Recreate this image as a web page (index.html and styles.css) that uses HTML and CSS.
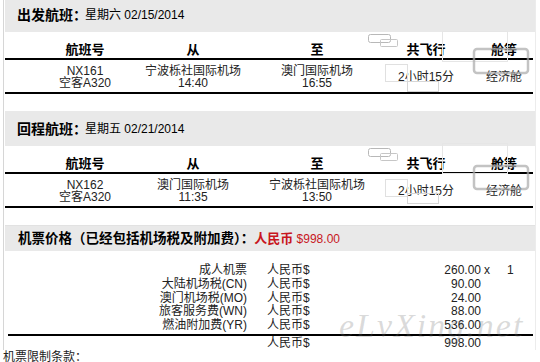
FILE: index.html
```html
<!DOCTYPE html>
<html lang="zh-CN">
<head>
<meta charset="utf-8">
<title>航班信息</title>
<link rel="stylesheet" href="styles.css">
</head>
<body>
<div class="page">
  <div class="panel">
    <section class="leg">
      <div class="band"><b class="band-label">出发航班：</b><span class="band-date">星期六 02/15/2014</span></div>
      <div class="flight">
        <div class="frow fhead"><span>航班号</span><span>从</span><span>至</span><span>共飞行</span><span class="last">舱等</span></div>
        <div class="frow fdata">
          <div class="cell"><span>NX161</span><span>空客A320</span></div>
          <div class="cell"><span>宁波栎社国际机场</span><span>14:40</span></div>
          <div class="cell"><span>澳门国际机场</span><span>16:55</span></div>
          <div class="cell mid">2小时15分</div>
          <div class="cell mid last">经济舱</div>
        </div>
      </div>
      <svg class="marks" width="530" height="100" viewBox="0 0 530 100" aria-hidden="true">
        <rect x="437.5" y="34.5" width="65" height="30" fill="none" stroke="#e6e6e6"/>
        <rect x="363.5" y="37.5" width="22" height="8" rx="2" fill="none" stroke="#b8b8b8"/>
        <rect x="375.5" y="42.5" width="17" height="7" rx="1" fill="none" stroke="#c6c6c6"/>
        <rect x="469" y="52" width="54" height="24" rx="3" fill="none" stroke="#aaaaaa" stroke-opacity="0.7" stroke-width="2.5"/>
        <rect x="380.5" y="67.5" width="22" height="17" fill="none" stroke="#e0e0e0"/>
        <rect x="402.5" y="84.5" width="31" height="10" fill="none" stroke="#d6d6d6"/>
      </svg>
    </section>

    <section class="leg">
      <div class="band"><b class="band-label">回程航班：</b><span class="band-date">星期五 02/21/2014</span></div>
      <div class="flight">
        <div class="frow fhead"><span>航班号</span><span>从</span><span>至</span><span>共飞行</span><span class="last">舱等</span></div>
        <div class="frow fdata">
          <div class="cell"><span>NX162</span><span>空客A320</span></div>
          <div class="cell"><span>澳门国际机场</span><span>11:35</span></div>
          <div class="cell"><span>宁波栎社国际机场</span><span>13:50</span></div>
          <div class="cell mid">2小时15分</div>
          <div class="cell mid last">经济舱</div>
        </div>
      </div>
      <svg class="marks" width="530" height="100" viewBox="0 0 530 100" aria-hidden="true">
        <rect x="437.5" y="32.5" width="65" height="30" fill="none" stroke="#e6e6e6"/>
        <rect x="363.5" y="37.5" width="22" height="8" rx="2" fill="none" stroke="#b8b8b8"/>
        <rect x="375.5" y="42.5" width="17" height="7" rx="1" fill="none" stroke="#c6c6c6"/>
        <rect x="469" y="55" width="54" height="23" rx="3" fill="none" stroke="#aaaaaa" stroke-opacity="0.7" stroke-width="2.5"/>
        <rect x="380.5" y="68.5" width="22" height="17" fill="none" stroke="#e0e0e0"/>
        <rect x="402.5" y="82.5" width="31" height="10" fill="none" stroke="#d6d6d6"/>
      </svg>
    </section>

    <section class="price">
      <div class="pband"><b class="pband-label">机票价格（已经包括机场税及附加费）：</b><span class="red"><b>人民币</b> $998.00</span></div>
      <div class="fees">
        <span class="lbl">成人机票</span><span class="cur">人民币$</span><span class="amt">260.00</span><span class="mul">x</span><span class="qty">1</span>
        <span class="lbl">大陆机场税(CN)</span><span class="cur">人民币$</span><span class="amt">90.00</span><span></span><span></span>
        <span class="lbl">澳门机场税(MO)</span><span class="cur">人民币$</span><span class="amt">24.00</span><span></span><span></span>
        <span class="lbl">旅客服务费(WN)</span><span class="cur">人民币$</span><span class="amt">88.00</span><span></span><span></span>
        <span class="lbl">燃油附加费(YR)</span><span class="cur">人民币$</span><span class="amt">536.00</span><span></span><span></span>
        <div class="rule"></div>
        <span class="lbl total"></span><span class="cur total">人民币$</span><span class="amt total">998.00</span><span class="total"></span><span class="total"></span>
      </div>
      <div class="watermark" aria-hidden="true">eLvXing.net</div>
    </section>
  </div>
  <p class="terms">机票限制条款：</p>
</div>
</body>
</html>
```

FILE: styles.css
```css
* { box-sizing: border-box; }

html, body {
  margin: 0;
  padding: 0;
  background: #ffffff;
}

body {
  font-family: "Liberation Sans", "Noto Sans CJK SC", sans-serif;
  font-size: 12px;
  color: #222;
  overflow: hidden;
}

.page {
  padding-left: 3px;
  width: 540px;
  height: 362px;
  overflow: hidden;
}

.panel {
  width: 533px;
  margin-top: -3px;
  border-left: 1px solid #d6d6d6;
  border-right: 1px solid #ececec;
  padding-left: 1px;
}

.leg {
  position: relative;
  padding-bottom: 17px;
}

.band {
  height: 35px;
  background: #e9e9e9;
  display: flex;
  align-items: center;
  padding: 1px 0 0 12px;
  color: #000;
}

.band-label {
  font-size: 14px;
  font-weight: 700;
  line-height: 16px;
}

.band-date {
  font-size: 12px;
  line-height: 16px;
  margin-left: -2px;
}

.flight {
  width: 528px;
}

.frow {
  display: grid;
  grid-template-columns: 120px 96px 152px 66px 74px;
  padding-left: 20px;
  border-bottom: 2px solid #000;
  text-align: center;
  white-space: nowrap;
}

.fhead {
  padding-top: 10px;
  font-size: 13px;
  font-weight: 700;
  line-height: 16px;
  color: #000;
}

.fhead .last, .fdata .last {
  padding-left: 16px;
}

.fdata {
  padding-top: 6px;
  padding-bottom: 3px;
  line-height: 11.5px;
}

.cell {
  display: flex;
  flex-direction: column;
  align-items: center;
}

.cell.mid {
  justify-content: center;
  padding-top: 1px;
}

.marks {
  position: absolute;
  top: 0;
  left: 0;
  pointer-events: none;
}

.price {
  position: relative;
}

.pband {
  height: 26px;
  border-top: 1px solid #e2e2e2;
  background: #e9e9e9;
  display: flex;
  align-items: center;
  padding: 1px 0 0 13px;
  color: #000;
  white-space: nowrap;
}

.pband-label {
  font-size: 13.5px;
  font-weight: 700;
  line-height: 16px;
}

.red {
  color: #c8161d;
  font-size: 12px;
  line-height: 16px;
}

.red b {
  font-size: 13px;
}

.fees {
  display: grid;
  grid-template-columns: 242px 120px 114px 22px 1fr;
  padding-top: 13px;
  line-height: 13.75px;
  white-space: nowrap;
}

.lbl {
  text-align: right;
}

.cur {
  padding-left: 20px;
}

.amt {
  text-align: right;
}

.mul {
  padding-left: 3px;
}

.qty {
  padding-left: 4px;
}

.rule {
  grid-column: 1 / -1;
  height: 2px;
  background: #000;
  margin: 1px 2px 0 3px;
}

.total {
  line-height: 14px;
}

.watermark {
  position: absolute;
  left: 334px;
  top: 83px;
  font-family: "Liberation Serif", serif;
  font-style: italic;
  font-size: 34px;
  letter-spacing: 2px;
  line-height: 36px;
  color: rgba(110, 110, 110, 0.25);
  pointer-events: none;
  white-space: nowrap;
}

.terms {
  margin: 0;
  line-height: 14px;
  font-size: 12px;
  color: #222;
}
```
